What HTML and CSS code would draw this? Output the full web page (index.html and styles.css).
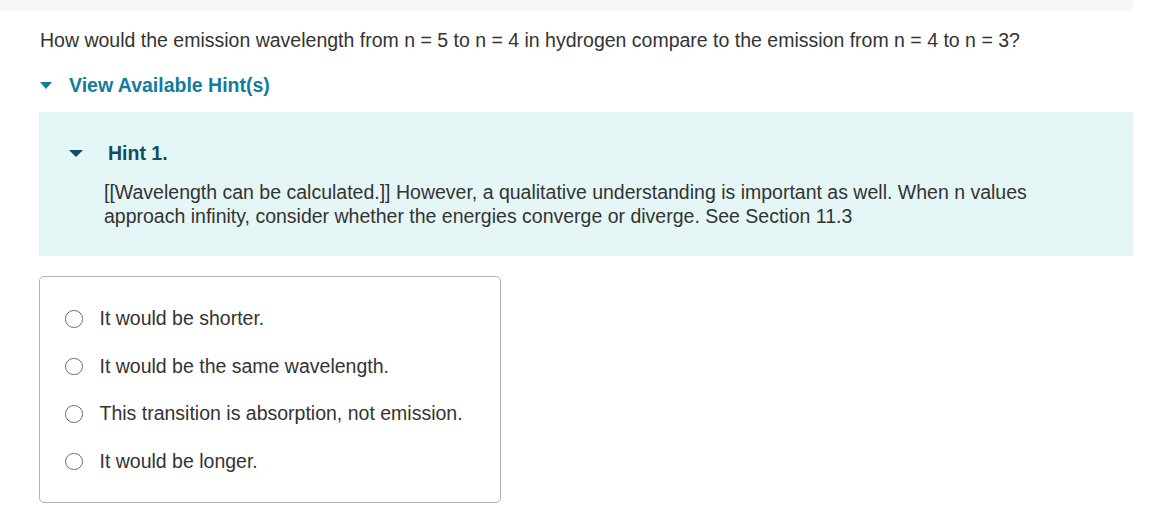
FILE: index.html
```html
<!DOCTYPE html>
<html>
<head>
<meta charset="utf-8">
<link rel="stylesheet" href="styles.css">
</head>
<body>
<div class="page">
  <div class="topbar"></div>
  <div class="content">
    <p class="question">How would the emission wavelength from n = 5 to n = 4 in hydrogen compare to the emission from n = 4 to n = 3?</p>
    <div class="hints-toggle">
      <span class="tri tri-link"></span>
      <span class="hints-label">View Available Hint(s)</span>
    </div>
    <div class="hint-box">
      <div class="hint-title">
        <span class="tri tri-hint"></span>
        <span class="hint-label">Hint 1.</span>
      </div>
      <div class="hint-body">[[Wavelength can be calculated.]] However, a qualitative understanding is important as well. When n values approach infinity, consider whether the energies converge or diverge. See Section 11.3</div>
    </div>
    <div class="options">
      <label class="option"><span class="radio"></span><span class="opt-text">It would be shorter.</span></label>
      <label class="option"><span class="radio"></span><span class="opt-text">It would be the same wavelength.</span></label>
      <label class="option"><span class="radio"></span><span class="opt-text">This transition is absorption, not emission.</span></label>
      <label class="option"><span class="radio"></span><span class="opt-text">It would be longer.</span></label>
    </div>
  </div>
</div>
</body>
</html>
```

FILE: styles.css
```css
html, body {
  margin: 0;
  padding: 0;
  background: #ffffff;
}
body {
  font-family: "Liberation Sans", Arial, sans-serif;
  color: #333333;
}
.page {
  width: 1133px;
}
.topbar {
  height: 11px;
  background: #f7f7f7;
}
.content {
  padding-left: 39px;
}
.question {
  margin: 0;
  padding-top: 17px;
  padding-left: 1px;
  font-size: 19.5px;
  line-height: 24px;
}
.hints-toggle {
  display: flex;
  align-items: center;
  margin-top: 21px;
  height: 24px;
  padding-left: 1px;
}
.tri {
  display: inline-block;
  width: 0;
  height: 0;
}
.tri-link {
  border-left: 6px solid transparent;
  border-right: 6px solid transparent;
  border-top: 7px solid #137c9b;
  margin-right: 17px;
}
.hints-label {
  font-size: 19.5px;
  font-weight: bold;
  color: #137c9b;
}
.hint-box {
  margin-top: 15px;
  background: #e5f6f7;
  padding: 29px 0 28px 0;
}
.hint-title {
  display: flex;
  align-items: center;
  height: 24px;
  padding-left: 30px;
}
.tri-hint {
  border-left: 7px solid transparent;
  border-right: 7px solid transparent;
  border-top: 7px solid #0f4f62;
  margin-right: 25px;
}
.hint-label {
  font-size: 19.5px;
  font-weight: bold;
  color: #0f4f62;
}
.hint-body {
  margin-top: 15px;
  padding-left: 65px;
  padding-right: 80px;
  font-size: 19.5px;
  line-height: 24px;
}
.options {
  margin-top: 20px;
  width: 462px;
  border: 1px solid #b3b3b3;
  border-radius: 5px;
  padding: 18px 0 17px 0;
  box-sizing: border-box;
  height: 227px;
}
.option {
  display: flex;
  align-items: center;
  height: 47.5px;
  padding-left: 25px;
}
.radio {
  width: 15.5px;
  height: 15.5px;
  border: 1px solid #6b6b6b;
  border-radius: 50%;
  margin-right: 17px;
  flex: none;
}
.opt-text {
  font-size: 19.5px;
}
```
